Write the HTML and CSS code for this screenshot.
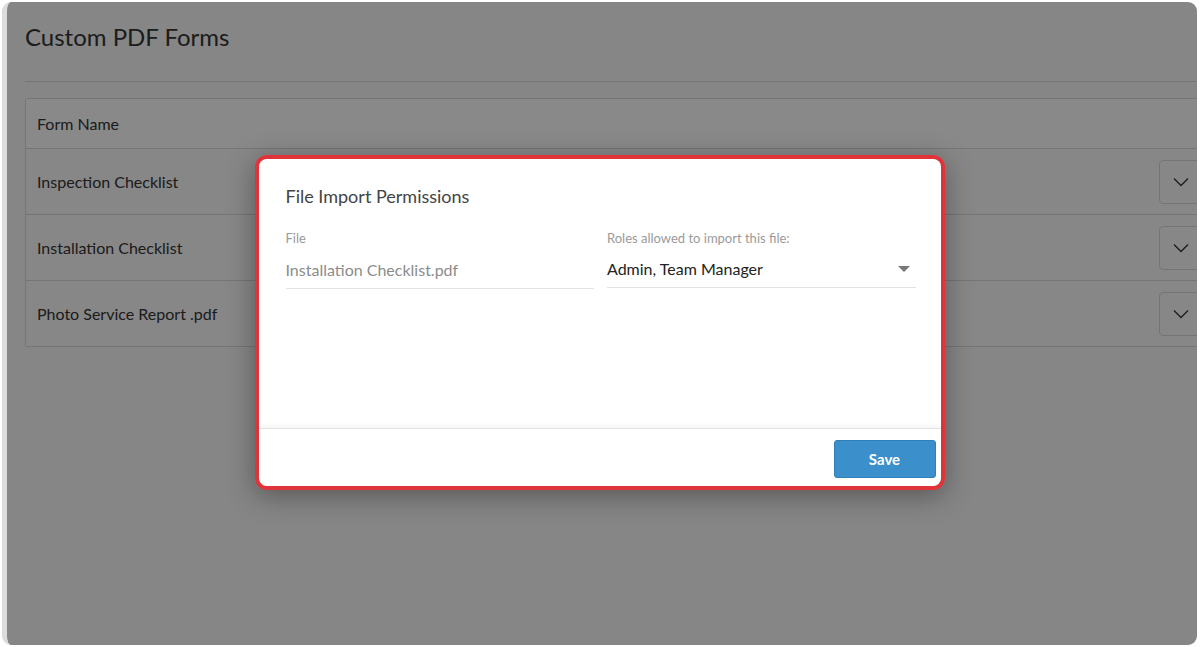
FILE: index.html
```html
<!DOCTYPE html>
<html lang="en">
<head>
  <meta charset="UTF-8">
  <title>Custom PDF Forms</title>
  <meta name="viewport" content="width=device-width, initial-scale=1.0">
  <link rel="stylesheet" href="styles.css">
</head>
<body>

  <div class="frame">
    <div class="page">
      <h1 class="page-title">Custom PDF Forms</h1>

      <div class="forms-table">
        <div class="table-head">Form Name</div>
        <div class="table-row">
          <span class="row-name">Inspection Checklist</span>
          <button class="row-toggle">
            <svg width="16" height="10" viewBox="0 0 16 10"><path d="M1 1.5l7 7 7-7" fill="none" stroke="#333" stroke-width="1.3"/></svg>
          </button>
        </div>
        <div class="table-row">
          <span class="row-name">Installation Checklist</span>
          <button class="row-toggle">
            <svg width="16" height="10" viewBox="0 0 16 10"><path d="M1 1.5l7 7 7-7" fill="none" stroke="#333" stroke-width="1.3"/></svg>
          </button>
        </div>
        <div class="table-row">
          <span class="row-name">Photo Service Report .pdf</span>
          <button class="row-toggle">
            <svg width="16" height="10" viewBox="0 0 16 10"><path d="M1 1.5l7 7 7-7" fill="none" stroke="#333" stroke-width="1.3"/></svg>
          </button>
        </div>
      </div>
    </div>

    <div class="overlay">
      <div class="modal-outline">
        <div class="modal">
          <div class="modal-body">
            <h2 class="modal-title">File Import Permissions</h2>
            <div class="fields">
              <div class="field">
                <label>File</label>
                <div class="field-value muted">Installation Checklist.pdf</div>
              </div>
              <div class="field">
                <label>Roles allowed to import this file:</label>
                <div class="field-value select">
                  <span>Admin, Team Manager</span>
                  <span class="caret"></span>
                </div>
              </div>
            </div>
          </div>
          <div class="modal-footer">
            <button class="btn-save">Save</button>
          </div>
        </div>
      </div>
    </div>
  </div>

</body>
</html>
```

FILE: styles.css
```css
body {
  font-family: Lato, "Open Sans", sans-serif;
  margin: 0;
  background: #fff;
  color: #333;
}

.frame {
  position: relative;
  margin: 2px 3px 2px 2px;
  height: 643px;
  border-radius: 9px;
  overflow: hidden;
  background: #f4f5f6;
  border-left: 5px solid #dcdcdc;
}

.page {
  padding: 0 0 0 18px;
}

.page-title {
  margin: 0;
  padding: 18px 0 27px;
  font-size: 24px;
  font-weight: 400;
  line-height: 34px;
  color: #333;
  border-bottom: 1px solid #d6d6d6;
}

.forms-table {
  margin-top: 16px;
  width: 1190px;
  border: 1px solid #d6d6d6;
  border-radius: 2px;
  background: #f6f6f6;
}

.table-head {
  height: 49px;
  line-height: 50px;
  padding-left: 11px;
  font-size: 16px;
  color: #333;
  background: #fafafa;
  border-bottom: 1px solid #d6d6d6;
}

.table-row {
  display: flex;
  align-items: center;
  justify-content: space-between;
  height: 65px;
  padding: 0 13px 0 11px;
  border-bottom: 1px solid #d6d6d6;
  font-size: 16px;
}

.table-row:last-child {
  border-bottom: none;
}

.row-toggle {
  width: 44px;
  height: 44px;
  background: #f6f6f6;
  border: 1px solid #d4d4d4;
  border-radius: 4px;
  display: flex;
  align-items: center;
  justify-content: center;
  padding: 0;
}

.overlay {
  position: absolute;
  inset: 0;
  background: rgba(0, 0, 0, 0.45);
  display: flex;
  align-items: center;
  justify-content: center;
}

.modal-outline {
  border: 4px solid #e0343a;
  border-radius: 12px;
  margin: 0 5px 2px 0;
  box-shadow: 0 6px 28px rgba(0, 0, 0, 0.35);
}

.modal {
  width: 682px;
  height: 327px;
  background: #fff;
  border-radius: 8px;
  display: flex;
  flex-direction: column;
}

.modal-body {
  flex: 1;
  padding: 24px 25px 0 27px;
}

.modal-title {
  margin: 0;
  font-size: 18px;
  font-weight: 400;
  line-height: 26px;
  color: #444;
}

.fields {
  display: grid;
  grid-template-columns: 1fr 1fr;
  gap: 13px;
  margin-top: 20px;
}

.field label {
  display: block;
  font-size: 13px;
  line-height: 18px;
  color: #9a9a9a;
}

.field-value {
  height: 37px;
  line-height: 37px;
  font-size: 16px;
  color: #222;
  border-bottom: 1px solid #e2e2e2;
  margin-top: 4px;
}

.field-value.muted {
  color: #8c8c8c;
}

.select {
  display: flex;
  justify-content: space-between;
  align-items: center;
  line-height: normal;
  padding-bottom: 1px;
  box-sizing: border-box;
}

.caret {
  width: 0;
  height: 0;
  border-left: 6px solid transparent;
  border-right: 6px solid transparent;
  border-top: 6px solid #777;
  margin-right: 6px;
}

.modal-footer {
  height: 58px;
  border-top: 1px solid #e4e4e4;
  box-shadow: 0 -3px 5px rgba(0, 0, 0, 0.04);
  display: flex;
  justify-content: flex-end;
  align-items: flex-start;
  padding: 11px 5px 0 0;
  box-sizing: border-box;
}

.btn-save {
  width: 102px;
  height: 38px;
  background-color: #3b8fca;
  border: 1px solid #2f80b8;
  border-radius: 3px;
  color: #fff;
  font-family: Lato, "Open Sans", sans-serif;
  font-size: 15px;
  font-weight: 700;
  cursor: pointer;
}
```
